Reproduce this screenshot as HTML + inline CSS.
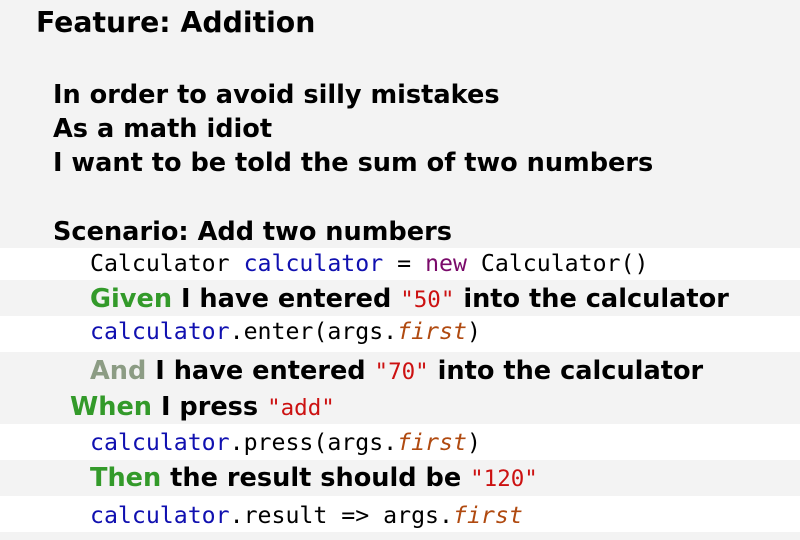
<!DOCTYPE html>
<html><head><meta charset="utf-8"><style>
html,body{margin:0;padding:0}
body{width:800px;height:540px;background:#f3f3f3;position:relative;overflow:hidden;font-family:"DejaVu Sans","Liberation Sans",sans-serif;}
.row{position:absolute;left:0;width:800px;background:#fff}
.t{position:absolute;white-space:pre;font-weight:bold;font-size:25.6px;color:#000;line-height:1}
.c{position:absolute;white-space:pre;font-family:"DejaVu Sans Mono","Liberation Mono",monospace;font-size:23.2px;color:#000;line-height:1}
.g{color:#339a2a}.a{color:#8c9c84}.b{color:#1010b0}.p{color:#7a0a6a}.s{color:#cc1111;font-family:"DejaVu Sans Mono",monospace;font-weight:normal;font-size:22.5px}.i{color:#b04a10;font-style:italic}
</style></head><body>
<div class="row" style="top:248px;height:32px"></div>
<div class="row" style="top:316px;height:36px"></div>
<div class="row" style="top:424px;height:36px"></div>
<div class="row" style="top:496px;height:36px"></div>
<div class="t" style="left:36px;top:9px;font-size:28.3px">Feature: Addition</div>
<div class="t" style="left:53px;top:83px">In order to avoid silly mistakes</div>
<div class="t" style="left:53px;top:117px">As a math idiot</div>
<div class="t" style="left:53px;top:151px">I want to be told the sum of two numbers</div>
<div class="t" style="left:53px;top:220px">Scenario: Add two numbers</div>
<div class="c" style="left:90px;top:252px">Calculator <span class="b">calculator</span> = <span class="p">new</span> Calculator()</div>
<div class="t" style="left:90px;top:287px"><span class="g">Given</span> I have entered <span class="s">"50"</span> into the calculator</div>
<div class="c" style="left:90px;top:320px"><span class="b">calculator</span>.enter(args.<span class="i">first</span>)</div>
<div class="t" style="left:90px;top:359px"><span class="a">And</span> I have entered <span class="s">"70"</span> into the calculator</div>
<div class="t" style="left:70px;top:395px"><span class="g">When</span> I press <span class="s">"add"</span></div>
<div class="c" style="left:90px;top:431px"><span class="b">calculator</span>.press(args.<span class="i">first</span>)</div>
<div class="t" style="left:90px;top:466px"><span class="g">Then</span> the result should be <span class="s">"120"</span></div>
<div class="c" style="left:90px;top:504px"><span class="b">calculator</span>.result =&gt; args.<span class="i">first</span></div>
</body></html>
